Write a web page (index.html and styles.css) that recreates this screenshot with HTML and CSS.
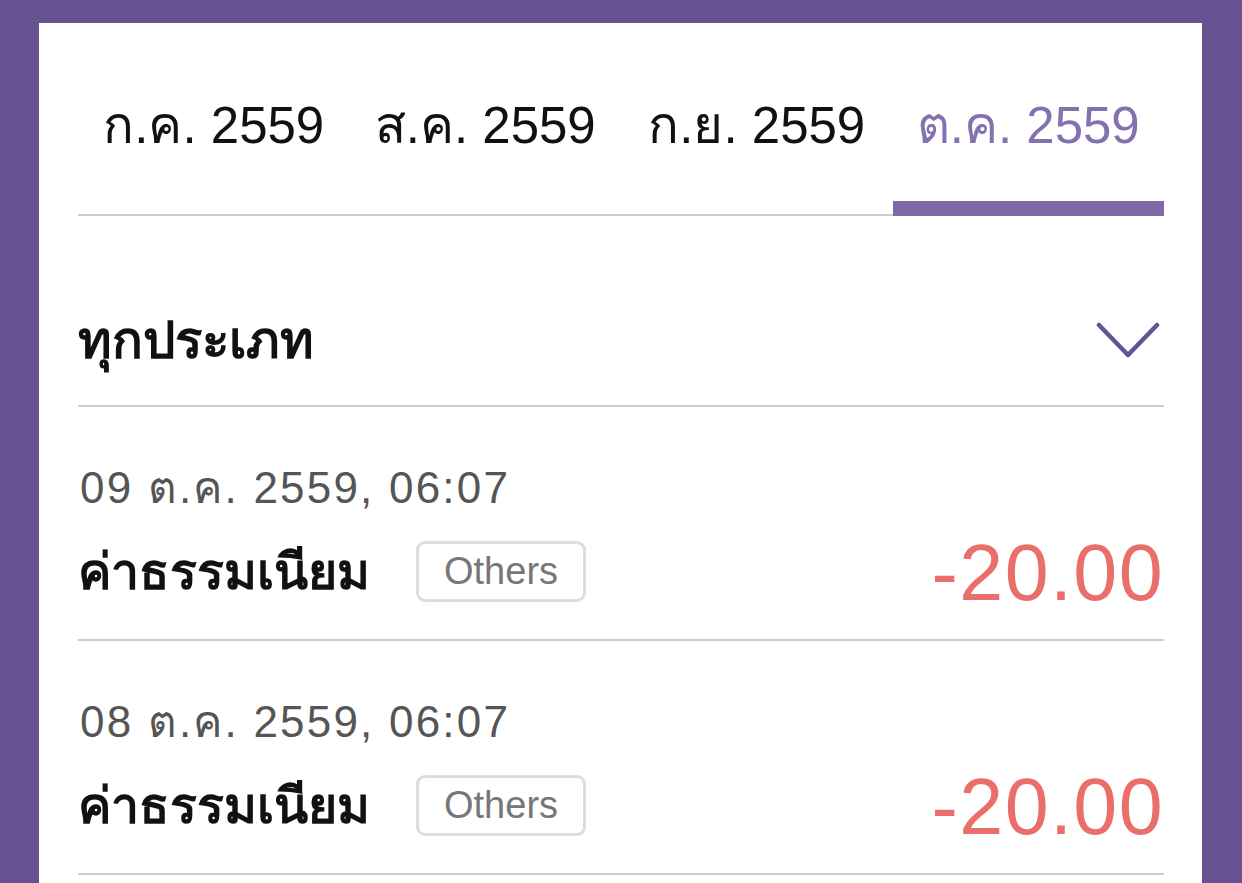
FILE: index.html
```html
<!DOCTYPE html>
<html lang="th">

<head>
  <meta charset="UTF-8">
  <meta name="viewport" content="width=device-width, initial-scale=1.0">
  <title>รายการ</title>
  <link rel="stylesheet" href="styles.css">
</head>

<body>
  <div class="card">
    <div class="tabs">
      <div class="tab">ก.ค. 2559</div>
      <div class="tab">ส.ค. 2559</div>
      <div class="tab">ก.ย. 2559</div>
      <div class="tab active">ต.ค. 2559</div>
    </div>

    <div class="filter">
      <span class="filter-label">ทุกประเภท</span>
      <svg class="chevron" width="64" height="36" viewBox="0 0 64 36">
        <polyline points="3,3 32,33 61,3" fill="none" stroke="#675394" stroke-width="4.5" stroke-linecap="round" stroke-linejoin="round" />
      </svg>
    </div>

    <div class="row">
      <div class="date">09 ต.ค. 2559, 06:07</div>
      <div class="line">
        <span class="title">ค่าธรรมเนียม</span>
        <span class="badge">Others</span>
        <span class="amount">-20.00</span>
      </div>
    </div>

    <div class="row">
      <div class="date">08 ต.ค. 2559, 06:07</div>
      <div class="line">
        <span class="title">ค่าธรรมเนียม</span>
        <span class="badge">Others</span>
        <span class="amount">-20.00</span>
      </div>
    </div>
  </div>
</body>

</html>
```

FILE: styles.css
```css
body {
  margin: 0;
  background-color: #675291;
  font-family: "Liberation Sans", Arial, "Noto Sans", sans-serif;
}

.card {
  margin: 23px 40px 0 39px;
  padding: 0 38px 0 39px;
  min-height: 860px;
  background-color: #fff;
}

/* month tabs */
.tabs {
  display: grid;
  grid-template-columns: repeat(4, 1fr);
  border-bottom: 2px solid #cccccc;
}

.tab {
  margin-bottom: -2px;
  padding: 73px 0 45px;
  line-height: 60px;
  font-size: 51px;
  text-align: center;
  color: #111;
  border-bottom: 15px solid transparent;
}

.tab.active {
  color: #8472b0;
  border-bottom-color: #7f6aa9;
}

/* type filter */
.filter {
  display: flex;
  align-items: center;
  justify-content: space-between;
  height: 191px;
  padding-top: 58px;
  box-sizing: border-box;
  border-bottom: 2px solid #cccccc;
}

.filter-label {
  font-size: 51px;
  font-weight: bold;
  color: #111;
}

.chevron {
  margin-right: 4px;
}

/* transactions */
.row {
  padding: 56px 0 28px;
  border-bottom: 2px solid #cccccc;
}

.date {
  padding-left: 2px;
  font-size: 44px;
  line-height: 50px;
  letter-spacing: 2.2px;
  color: #555;
}

.line {
  display: flex;
  align-items: center;
  height: 80px;
  margin-top: 18px;
}

.title {
  font-size: 50px;
  font-weight: bold;
  color: #111;
}

.badge {
  margin-left: 46px;
  padding: 6px 25px 6px;
  border: 3px solid #dddddd;
  border-radius: 9px;
  font-size: 38px;
  line-height: 43px;
  color: #777;
}

.amount {
  margin-left: auto;
  padding-top: 4px;
  font-size: 79px;
  letter-spacing: 1.4px;
  color: #ea6f6a;
}
```
